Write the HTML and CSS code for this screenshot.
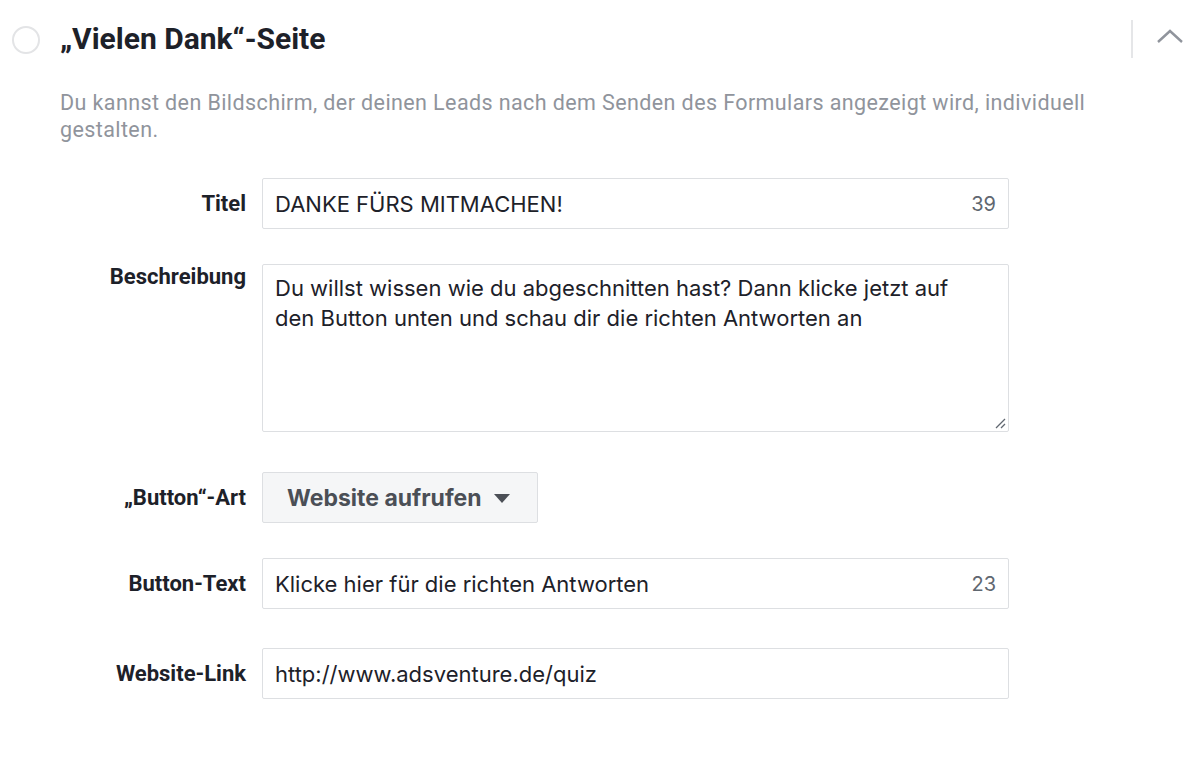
FILE: index.html
```html
<!DOCTYPE html>
<html lang="de">

<head>
    <meta charset="UTF-8">
    <title>Vielen Dank-Seite</title>
    <link rel="stylesheet" href="styles.css">
</head>

<body>
    <div class="section">
        <!-- Kopfzeile mit Status-Kreis, Titel und Einklapp-Pfeil -->
        <div class="section-head">
            <span class="status"></span>
            <h2>„Vielen Dank“-Seite</h2>
            <div class="head-tools">
                <span class="divider"></span>
                <svg class="chevron" width="28" height="16" viewBox="0 0 28 16">
                    <path d="M2 14 L14 3 L26 14" fill="none" stroke="#90949c" stroke-width="2.4"/>
                </svg>
            </div>
        </div>

        <p class="hint">Du kannst den Bildschirm, der deinen Leads nach dem Senden des Formulars angezeigt wird, individuell gestalten.</p>

        <!-- Formularfelder -->
        <div class="form">
            <div class="row">
                <label>Titel</label>
                <div class="field">
                    <span class="value">DANKE FÜRS MITMACHEN!</span>
                    <span class="count">39</span>
                </div>
            </div>

            <div class="row top">
                <label>Beschreibung</label>
                <div class="field area">
                    <span class="value">Du willst wissen wie du abgeschnitten hast? Dann klicke jetzt auf den Button unten und schau dir die richten Antworten an</span>
                    <svg class="grip" width="12" height="12" viewBox="0 0 12 12">
                        <path d="M11 2 L2 11 M11 7 L7 11" stroke="#606770" stroke-width="1.3"/>
                    </svg>
                </div>
            </div>

            <div class="row">
                <label>„Button“-Art</label>
                <button class="select">Website aufrufen <span class="caret"></span></button>
            </div>

            <div class="row">
                <label>Button-Text</label>
                <div class="field">
                    <span class="value">Klicke hier für die richten Antworten</span>
                    <span class="count">23</span>
                </div>
            </div>

            <div class="row last">
                <label>Website-Link</label>
                <div class="field">
                    <span class="value">http://www.adsventure.de/quiz</span>
                </div>
            </div>
        </div>
    </div>
</body>

</html>
```

FILE: styles.css
```css
/* Grundlayout */
body {
    margin: 0;
    background: #ffffff;
    font-family: Roboto, "Liberation Sans", sans-serif;
    color: #1d2129;
}

.section {
    padding: 0 0 40px 0;
}

/* Kopfzeile */
.section-head {
    display: flex;
    align-items: center;
    height: 78px;
}

.status {
    width: 24px;
    height: 24px;
    border: 2.5px solid #e3e4e6;
    border-radius: 50%;
    margin-left: 12px;
    margin-top: 1px;
}

.section-head h2 {
    margin: 0 0 2px 20px;
    font-size: 30px;
    font-weight: 700;
    color: #1d2129;
    flex: 1;
}

.head-tools {
    display: flex;
    align-items: center;
    gap: 23px;
    margin-right: 16px;
}

.divider {
    width: 2px;
    height: 38px;
    background: #e5e6e8;
}

.chevron {
    margin-bottom: 6px;
}

/* Hinweistext */
.hint {
    margin: 11px 100px 0 60px;
    font-size: 21.5px;
    letter-spacing: 0.4px;
    line-height: 27px;
    color: #90949c;
}

/* Formular */
.form {
    margin-top: 35px;
    margin-left: 60px;
}

.row {
    display: flex;
    align-items: center;
    margin-bottom: 35px;
}

.row.top {
    align-items: flex-start;
    margin-bottom: 40px;
}

.row.last {
    margin-top: 39px;
}

.row label {
    width: 186px;
    margin-right: 16px;
    text-align: right;
    font-size: 22px;
    font-weight: 700;
    color: #1d2129;
}

.field {
    width: 747px;
    height: 51px;
    box-sizing: border-box;
    border: 1.5px solid #dddfe2;
    border-radius: 2px;
    display: flex;
    align-items: center;
    padding: 0 12px 0 12px;
    font-family: Inter, "Liberation Sans", sans-serif;
    font-size: 22px;
    color: #1d2129;
}

.field .value {
    flex: 1;
}

.count {
    color: #606770;
    font-size: 20px;
}

.field.area {
    height: 168px;
    align-items: flex-start;
    padding: 8px 30px 0 12px;
    line-height: 30px;
    position: relative;
}

.grip {
    position: absolute;
    right: 2px;
    bottom: 2px;
}

/* Auswahl-Button */
.select {
    height: 51px;
    width: 276px;
    box-sizing: border-box;
    background: #f5f6f7;
    border: 1.5px solid #dddfe2;
    border-radius: 2px;
    font-family: Inter, "Liberation Sans", sans-serif;
    font-size: 23px;
    font-weight: 700;
    color: #4b4f56;
    display: flex;
    align-items: center;
    padding: 0 0 0 24px;
    gap: 12px;
}

.caret {
    width: 0;
    height: 0;
    border-left: 8px solid transparent;
    border-right: 8px solid transparent;
    border-top: 9px solid #4b4f56;
    margin-top: 2px;
}
```
